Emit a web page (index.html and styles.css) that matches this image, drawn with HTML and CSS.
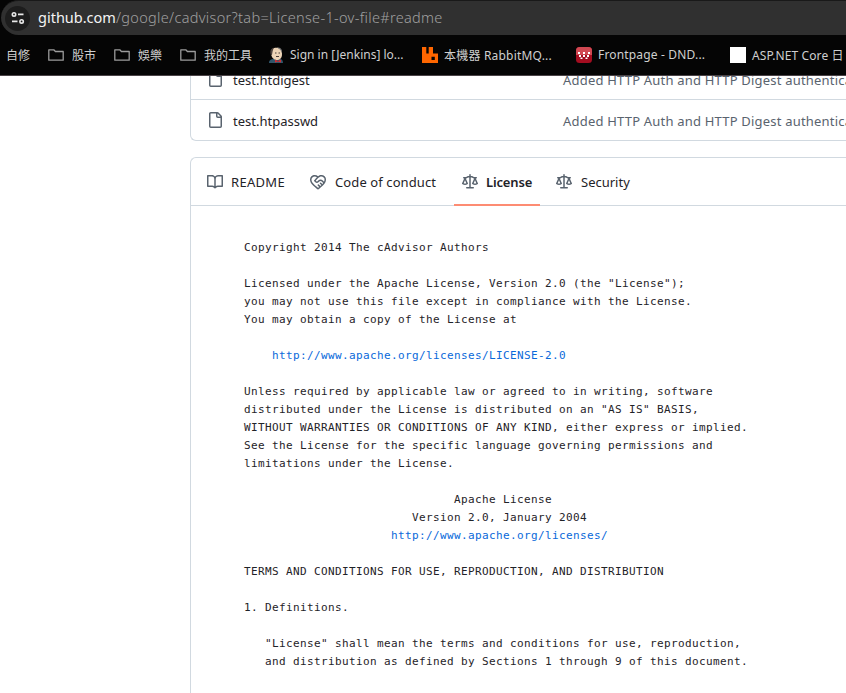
FILE: index.html
```
<!DOCTYPE html>
<html lang="zh-Hant">
<head>
<meta charset="utf-8">
<title>cadvisor</title>
<link rel="stylesheet" href="styles.css">
</head>
<body>
<svg class="defs" aria-hidden="true">
  <symbol id="file" viewBox="0 0 16 16"><path d="M2 1.75C2 .784 2.784 0 3.75 0h6.586c.464 0 .909.184 1.237.513l2.914 2.914c.329.328.513.773.513 1.237v9.586A1.75 1.75 0 0 1 13.25 16h-9.5A1.75 1.75 0 0 1 2 14.25Zm1.75-.25a.25.25 0 0 0-.25.25v12.5c0 .138.112.25.25.25h9.5a.25.25 0 0 0 .25-.25V6h-2.75A1.75 1.75 0 0 1 9 4.25V1.5Zm6.75.062V4.25c0 .138.112.25.25.25h2.688l-.011-.013-2.914-2.914-.013-.011Z"/></symbol>
  <symbol id="book" viewBox="0 0 16 16"><path d="M0 1.75A.75.75 0 0 1 .75 1h4.253c1.227 0 2.317.59 3 1.501A3.743 3.743 0 0 1 11.006 1h4.245a.75.75 0 0 1 .75.75v10.5a.75.75 0 0 1-.75.75h-4.507a2.25 2.25 0 0 0-1.591.659l-.622.621a.75.75 0 0 1-1.06 0l-.622-.621A2.25 2.25 0 0 0 5.258 13H.75a.75.75 0 0 1-.75-.75Zm7.251 10.324.004-5.073-.002-2.253A2.25 2.25 0 0 0 5.003 2.5H1.5v9h3.757a3.75 3.75 0 0 1 1.994.574ZM8.755 4.75l-.004 7.322a3.752 3.752 0 0 1 1.992-.572H14.5v-9h-3.495a2.25 2.25 0 0 0-2.25 2.25Z"/></symbol>
  <symbol id="law" viewBox="0 0 16 16"><path d="M8.75.75V2h.985c.304 0 .603.08.867.231l1.29.736c.038.022.08.033.124.033h2.234a.75.75 0 0 1 0 1.5h-.427l2.111 4.692a.75.75 0 0 1-.154.838l-.53-.53.529.531-.001.002-.002.002-.006.006-.006.005-.01.01-.045.04c-.21.176-.441.327-.686.45C14.556 10.78 13.88 11 13 11a4.498 4.498 0 0 1-2.023-.454 3.544 3.544 0 0 1-.686-.45l-.045-.04-.016-.015-.006-.006-.004-.004v-.001a.75.75 0 0 1-.154-.838L12.178 4.5h-.162c-.305 0-.604-.079-.868-.231l-1.29-.736a.245.245 0 0 0-.124-.033H8.75V13h2.5a.75.75 0 0 1 0 1.5h-6.5a.75.75 0 0 1 0-1.5h2.5V3.5h-.984a.245.245 0 0 0-.124.033l-1.289.737c-.265.15-.564.23-.869.23h-.162l2.112 4.692a.75.75 0 0 1-.154.838l-.53-.53.529.531-.001.002-.002.002-.006.006-.016.015-.045.04c-.21.176-.441.327-.686.45C4.556 10.78 3.88 11 3 11a4.498 4.498 0 0 1-2.023-.454 3.544 3.544 0 0 1-.686-.45l-.045-.04-.016-.015-.006-.006-.004-.004v-.001a.75.75 0 0 1-.154-.838L2.178 4.5H1.75a.75.75 0 0 1 0-1.5h2.234a.249.249 0 0 0 .125-.033l1.288-.737c.265-.15.564-.23.869-.23h.984V.75a.75.75 0 0 1 1.5 0Zm2.945 8.477c.285.135.718.273 1.305.273s1.02-.138 1.305-.273L13 6.327Zm-10 0c.285.135.718.273 1.305.273s1.02-.138 1.305-.273L3 6.327Z"/></symbol>
  <symbol id="conduct" viewBox="0 0 16 16"><path d="M8.048 2.241c.964-.709 2.079-1.238 3.325-1.241a4.616 4.616 0 0 1 3.282 1.355c.41.408.757.86.996 1.428.238.568.348 1.206.347 1.968 0 2.193-1.505 4.254-3.081 5.862-1.496 1.526-3.213 2.796-4.249 3.563l-.22.163a.749.749 0 0 1-.895 0l-.221-.163c-1.036-.767-2.753-2.037-4.249-3.563C1.51 10.008.007 7.952.002 5.762a4.614 4.614 0 0 1 1.353-3.407C3.123.585 6.223.537 8.048 2.24Zm-1.153.983c-1.25-1.033-3.321-.967-4.48.191a3.115 3.115 0 0 0-.913 2.335c0 1.556 1.109 3.24 2.652 4.813C5.463 11.898 6.96 13.032 8 13.805c.353-.262.758-.565 1.191-.905l-1.326-1.223a.75.75 0 0 1 1.018-1.102l1.48 1.366c.328-.281.659-.577.984-.887L9.99 9.802a.75.75 0 1 1 1.019-1.103l1.384 1.28c.295-.329.566-.661.81-.995L12.92 8.7l-1.167-1.168c-.674-.671-1.78-.664-2.474.03-.268.269-.538.537-.802.797-.893.882-2.319.843-3.185-.032-.346-.35-.693-.697-1.043-1.047a.75.75 0 0 1-.04-1.016c.162-.191.336-.401.52-.623.62-.748 1.356-1.637 2.207-2.417Zm7.112 4.442c.313-.65.491-1.293.491-1.916v-.001c0-.614-.088-1.045-.23-1.385-.143-.339-.357-.633-.673-.949a3.111 3.111 0 0 0-2.218-.915c-1.092.003-2.165.627-3.226 1.602-.823.755-1.554 1.637-2.228 2.45l-.127.154.562.566a.755.755 0 0 0 1.066.02l.794-.79c1.258-1.258 3.312-1.31 4.594-.032.396.394.792.791 1.173 1.173Z"/></symbol>
  <symbol id="folder" viewBox="0 0 16 16"><path d="M.8 2.8h5l1.6 1.7h7.8v8.7H.8Z" fill="none" stroke="#9c9c9c" stroke-width="1.3" stroke-linejoin="round"/></symbol>
</svg>
<header class="chrome">
  <div class="omnibox">
    <span class="site-info"><svg width="16" height="16" viewBox="0 0 16 16" fill="none" stroke="#e8e8e8" stroke-width="1.6"><circle cx="4" cy="4.400" r="1.700"/><path d="M8 4.400h5.500M2 11.400h5.500"/><circle cx="11.600" cy="11.400" r="1.700"/></svg></span>
    <span class="url"><b>github.com</b>/google/cadvisor?tab=License-1-ov-file#readme</span>
  </div>
  <nav class="bookmarks">
    <a class="bm bm1"><span>自修</span></a>
    <a class="bm bm2"><svg><use href="#folder"/></svg><span>股市</span></a>
    <a class="bm bm3"><svg><use href="#folder"/></svg><span>娛樂</span></a>
    <a class="bm bm4"><svg><use href="#folder"/></svg><span>我的工具</span></a>
    <a class="bm bm5"><svg viewBox="0 0 16 16"><path d="M0 16c0-3 2-4 5-4l5-.5c3 .5 4 2 4 4.500Z" fill="#31566b"/><path d="M2 6C2 2 4 .7 7.500.7S13 3 13 7s-2 6-5.500 6S2 9 2 6Z" fill="#ecd3b6"/><path d="M2 8C.5 4 2 1 5 .7 3.500 3 3.500 5 3 8Z" fill="#4b403b"/><path d="M8 .6c4 0 5.500 2 4.800 5.500L11.500 3Z" fill="#777"/><path d="M6 6h1.500M9.500 6H11M7 9.500h3" stroke="#4b403b"/><path d="m6 12.500 3 1.500 3-1.500v3l-3-1-3 1Z" fill="#d32d32"/></svg><span>Sign in [Jenkins] lo...</span></a>
    <a class="bm bm6"><svg viewBox="0 0 16 16"><path fill="#f60" fill-rule="evenodd" d="M0 0h4.300v6.500h2.400V0H11v6.500h5V16H0Zm9.500 9.700v3.300h3.300V9.700Z"/></svg><span>本機器 RabbitMQ...</span></a>
    <a class="bm bm7"><svg viewBox="0 0 16 16"><rect width="16" height="16" rx="3.500" fill="#a40d20"/><path d="M0 8V3.500Q0 0 3.500 0h9Q16 0 16 3.500V8Z" fill="#d04852"/><path fill="#fff" d="M2 5h2v2H2zM7 5h2v2H7zM12 5h2v2h-2zM3 8h2v2H3zM7 8h2v2H7zM11 8h2v2h-2zM4.500 10.500h2v1.600h-2zM9.500 10.500h2v1.600h-2z"/></svg><span>Frontpage - DND...</span></a>
    <a class="bm bm8"><i class="blank"></i><span>ASP.NET Core 日</span></a>
  </nav>
</header>
<main class="page">
  <section class="files">
    <div class="row"><svg><use href="#file"/></svg><span class="name">test.htdigest</span><span class="msg">Added HTTP Auth and HTTP Digest authentication</span></div>
    <div class="row"><svg><use href="#file"/></svg><span class="name">test.htpasswd</span><span class="msg">Added HTTP Auth and HTTP Digest authentication</span></div>
  </section>
  <section class="panel">
    <nav class="tabs">
      <a class="tab t1"><svg><use href="#book"/></svg><span>README</span></a>
      <a class="tab t2"><svg><use href="#conduct"/></svg><span>Code of conduct</span></a>
      <a class="tab t3 active"><svg><use href="#law"/></svg><span>License</span></a>
      <a class="tab t4"><svg><use href="#law"/></svg><span>Security</span></a>
    </nav>
<pre class="license">Copyright 2014 The cAdvisor Authors

Licensed under the Apache License, Version 2.0 (the "License");
you may not use this file except in compliance with the License.
You may obtain a copy of the License at

    <a>http://www.apache.org/licenses/LICENSE-2.0</a>

Unless required by applicable law or agreed to in writing, software
distributed under the License is distributed on an "AS IS" BASIS,
WITHOUT WARRANTIES OR CONDITIONS OF ANY KIND, either express or implied.
See the License for the specific language governing permissions and
limitations under the License.

                              Apache License
                        Version 2.0, January 2004
                     <a>http://www.apache.org/licenses/</a>

TERMS AND CONDITIONS FOR USE, REPRODUCTION, AND DISTRIBUTION

1. Definitions.

   "License" shall mean the terms and conditions for use, reproduction,
   and distribution as defined by Sections 1 through 9 of this document.

   "Licensor" shall mean the copyright owner or entity authorized by
</pre>
  </section>
</main>
</body>
</html>
```
FILE: styles.css
```
* { box-sizing: border-box; }
body {
  margin: 0;
  height: 693px;
  overflow: hidden;
  display: flex;
  flex-direction: column;
  background: #fff;
  color: #1f2328;
  font-family: "Noto Sans", "Noto Sans CJK TC", sans-serif;
  font-size: 13px;
}
.defs { display: none; }
.chrome {
  flex: none;
  height: 76px;
  background: #050505;
  border-bottom: 1px solid #4a4347;
  overflow: hidden;
}
.omnibox {
  display: flex;
  align-items: center;
  height: 35px;
  margin-left: 1px;
  padding-left: 4px;
  background: #303030;
  border-top: 1px solid #191919;
  border-radius: 18px 0 0 18px;
}
.site-info {
  display: grid;
  place-items: center;
  width: 25px;
  height: 25px;
  border-radius: 50%;
  background: #1d1d1d;
}
.url {
  margin-left: 8px;
  padding-bottom: 2px;
  white-space: nowrap;
  line-height: 20px;
  font-size: 14.5px;
  font-weight: 300;
  letter-spacing: 0.32px;
  color: #a0a0a0;
}
.url b { font-weight: 400; letter-spacing: 0; color: #f4f4f4; }
.bookmarks {
  display: flex;
  align-items: center;
  height: 40px;
  padding-left: 6px;
  font-size: 12px;
  color: #cfcfcf;
}
.bm { display: flex; flex: none; align-items: center; gap: 7px; white-space: nowrap; }
.bm svg, .blank { width: 16px; height: 16px; flex: none; }
.bm span { padding-bottom: 1px; }
.blank { background: #fff; }
.bm1 { width: 42px; }
.bm2, .bm3 { width: 66px; gap: 8px; }
.bm4 { width: 89px; gap: 8px; }
.bm5 { width: 153px; gap: 5px; }
.bm6 { width: 154px; gap: 6px; letter-spacing: 0.2px; }
.bm7 { width: 154px; gap: 6px; letter-spacing: 0.17px; }
.bm8 { gap: 6px; letter-spacing: 0.1px; }
.page {
  flex: 1;
  min-height: 0;
  display: flex;
  flex-direction: column;
  gap: 16px;
  padding-left: 190px;
  overflow: hidden;
}
.files {
  flex: none;
  height: 65px;
  display: flex;
  flex-direction: column;
  justify-content: flex-end;
  overflow: hidden;
  border: 1px solid #d1d9e0;
  border-width: 0 0 1px 1px;
  border-bottom-left-radius: 6px;
}
.row {
  flex: none;
  height: 41px;
  display: flex;
  align-items: center;
  padding-left: 16px;
  white-space: nowrap;
  border-top: 1px solid #d1d9e0;
}
.row svg, .tab svg { width: 16px; height: 16px; flex: none; fill: #59636e; }
.name { flex: none; width: 330px; margin-left: 10px; }
.msg { color: #59636e; letter-spacing: 0.2px; }
.row span { padding-top: 1px; }
.panel {
  flex: 1;
  min-height: 0;
  overflow: hidden;
  border: 1px solid #d1d9e0;
  border-width: 1px 0 0 1px;
  border-top-left-radius: 6px;
}
.tabs {
  display: flex;
  height: 48px;
  padding-left: 8px;
  border-bottom: 1px solid #d1d9e0;
}
.tab {
  display: flex;
  flex: none;
  align-items: center;
  gap: 8px;
  height: 48px;
  padding-left: 8px;
  white-space: nowrap;
}
.t1 { width: 103px; letter-spacing: 0.3px; }
.t2 { width: 152px; gap: 9px; letter-spacing: 0.1px; }
.t3 { width: 86px; margin-right: 8px; letter-spacing: -0.15px; }
.t4 { gap: 9px; }
.active { font-weight: 600; box-shadow: inset 0 -2px #fd8c73; }
.license {
  margin: 0;
  padding: 33px 0 0 53px;
  font: 11px/18px "DejaVu Sans Mono", monospace;
  letter-spacing: 0.378px;
}
.license a { color: #0969da; }
```
